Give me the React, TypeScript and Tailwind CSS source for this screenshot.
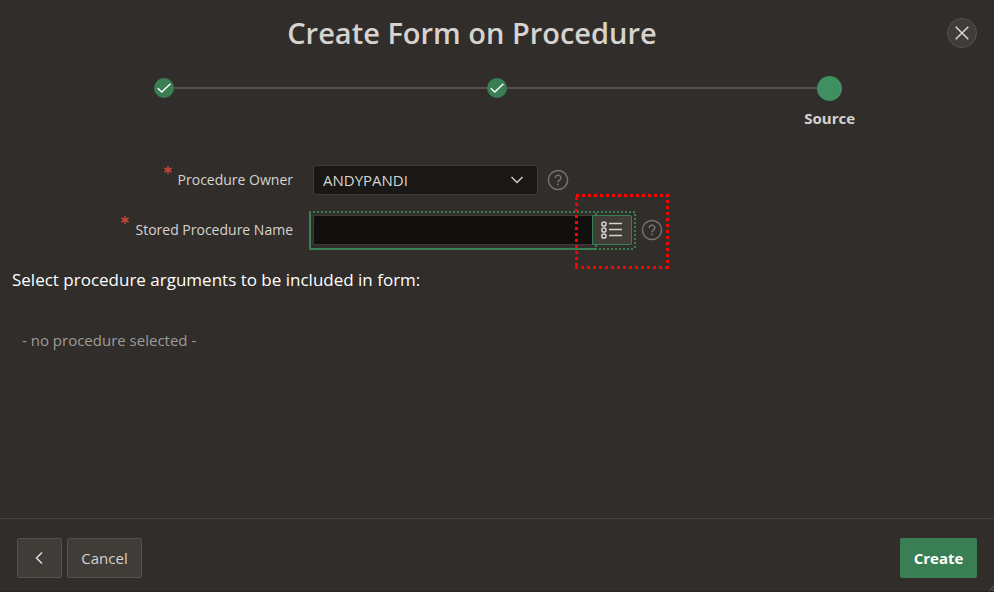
import React from "react";

function HelpButton({ label }: { label: string }) {
  return (
    <button type="button" aria-label={label} className="size-[22px] shrink-0">
      <svg width="22" height="22" viewBox="0 0 22 22" fill="none" stroke="#76716c" strokeWidth="1.5" aria-hidden="true">
        <circle cx="11" cy="11" r="9.6" />
        <path d="M8.200 8.900a2.800 2.700 0 1 1 4.300 2.200c-1 .6-1.500 1-1.500 2.200" strokeWidth="1.5" />
        <path d="M11 14.600v1.600" strokeWidth="1.6" />
      </svg>
    </button>
  );
}

function Required() {
  return (
    <svg width="8" height="8" viewBox="0 0 8 8" stroke="#c74634" strokeWidth="1.500" className="shrink-0 -translate-y-2.5" aria-hidden="true">
      <path d="M4 0v8M.4 2l7.200 4M.4 6l7.200-4" />
    </svg>
  );
}

function DoneMark() {
  return (
    <span className="flex size-5 items-center justify-center rounded-full bg-[#397f53]">
      <svg width="14" height="10" viewBox="0 0 14 10" fill="none" stroke="#fff" strokeWidth="1.4" aria-hidden="true">
        <path d="M.8 5.200l4 3.800L13.400.800" />
      </svg>
    </span>
  );
}

export default function App() {
  return (
    <main className="relative flex min-h-screen flex-col overflow-hidden border-b border-[#2a242a] bg-[#312d2a] font-['Open_Sans','Noto_Sans',sans-serif] text-[15px] leading-5 text-[#d6d3cf]">
      <header className="flex items-center px-[17px] pt-[15px]">
        <h1 className="flex-1 pr-5 text-center text-[29px] leading-9 font-semibold">Create Form on Procedure</h1>
        <button type="button" aria-label="Close" className="flex size-[30px] items-center justify-center rounded-full border border-[#55514c] bg-[#403c38]">
          <svg width="14" height="14" viewBox="0 0 14 14" stroke="#e0ddd9" strokeWidth="1.4" aria-hidden="true">
            <path d="M.7.700l12.600 12.600M13.300.700L.700 13.300" />
          </svg>
        </button>
      </header>

      <ol className="-mx-0.5 mt-[25px] grid grid-cols-3">
        <li className="flex h-6 items-center">
          <span className="flex-1" />
          <DoneMark />
          <span className="h-0.5 flex-1 bg-[#55514a]" />
        </li>
        <li className="flex h-6 items-center">
          <span className="h-0.5 flex-1 bg-[#55514a]" />
          <DoneMark />
          <span className="h-0.5 flex-1 bg-[#55514a]" />
        </li>
        <li>
          <div className="flex h-6 items-center">
            <span className="h-0.5 flex-1 bg-[#55514a]" />
            <span className="size-[25px] rounded-full bg-[#3f8f60]" />
            <span className="flex-1" />
          </div>
          <p className="mt-2 text-center font-bold">Source</p>
        </li>
      </ol>

      <form className="mt-[37px] flex flex-col gap-5">
        <div className="flex h-[30px] items-center">
          <label htmlFor="owner" className="mr-5 flex w-[293px] items-center justify-end gap-1.5 text-sm">
            <Required />
            Procedure Owner
          </label>
          <div className="relative mr-[9px]">
            <select id="owner" className="block h-[30px] w-[225px] appearance-none rounded-xs border border-[#3f3c38] bg-[#191816] pl-[9px] text-[#d6d3cf]">
              <option>ANDYPANDI</option>
            </select>
            <svg className="pointer-events-none absolute top-[11px] right-3.5" width="14" height="8" viewBox="0 0 14 8" fill="none" stroke="#d0cdc9" strokeWidth="1.5" aria-hidden="true">
              <path d="M1.500 1L7 6.500 12.500 1" />
            </svg>
          </div>
          <HelpButton label="Help for procedure owner" />
        </div>

        <div className="flex h-[30px] items-center">
          <label htmlFor="procedure" className="mr-5 flex w-[293px] items-center justify-end gap-1.5 text-sm">
            <Required />
            Stored Procedure Name
          </label>
          <div className="relative mr-[9px] flex">
            <input id="procedure" type="text" className="h-[30px] w-[279px] rounded-l-xs border border-r-0 border-[#3f3c38] bg-[#11100e] px-2 outline-none" />
            <button type="button" aria-label="Select procedure" className="flex h-[30px] w-10 items-center justify-center rounded-r-xs border border-[#397f53] bg-[#403c38]">
              <svg width="22" height="20" viewBox="0 0 22 20" fill="none" stroke="#d6d3cf" aria-hidden="true">
                <g strokeWidth="1.5">
                  <circle cx="2.900" cy="4" r="2.100" />
                  <circle cx="2.900" cy="10" r="2.100" />
                  <circle cx="2.900" cy="16" r="2.100" />
                </g>
                <path d="M8 3.500h13M8 9.500h13M8 15.500h13" strokeWidth="1.3" />
              </svg>
            </button>
            <svg className="pointer-events-none absolute -top-1 -left-1 overflow-visible" width="327" height="39" fill="none" stroke="#397f53" strokeWidth="2" shapeRendering="crispEdges" aria-hidden="true">
              <path d="M1 0V38H288" />
              <path d="M4 1H327M326 3V39M290 38H325" strokeDasharray="2 2" />
              <path d="M287 2v2M287 34v2" />
            </svg>
            <svg className="pointer-events-none absolute -top-[21px] left-[262px]" width="94" height="75" fill="none" stroke="#ff0000" strokeWidth="3" shapeRendering="crispEdges" aria-hidden="true">
              <path d="M1 1.500H94M0 73.500H94" strokeDasharray="3 3" />
              <path d="M1.500 3V75M92.500 0V75" strokeDasharray="3 3" />
            </svg>
          </div>
          <HelpButton label="Help for stored procedure name" />
        </div>
      </form>

      <section className="px-3 pt-[23px]">
        <h2 className="text-[17px] leading-6 text-white">Select procedure arguments to be included in form:</h2>
        <p className="mt-9 ml-2.5 leading-6 text-[#9f9b96]">- no procedure selected -</p>
      </section>

      <footer className="mt-auto flex gap-[5px] border-t border-[#45413d] px-[17px] pt-[19px] pb-[13px]">
        <button type="button" aria-label="Previous" className="flex h-10 w-[45px] items-center justify-center rounded-xs border border-[#55514c] bg-[#403c38]">
          <svg width="9" height="14" viewBox="0 0 9 14" fill="none" stroke="#e0ddd9" strokeWidth="1.5" aria-hidden="true">
            <path d="M7 1.500L1.500 7 7 12.500" />
          </svg>
        </button>
        <button type="button" className="h-10 w-[75px] rounded-xs border border-[#55514c] bg-[#403c38]">Cancel</button>
        <button type="button" className="ml-auto h-10 w-[77px] rounded-xs bg-[#397f53] font-bold text-white">Create</button>
      </footer>

      <svg className="absolute right-0 bottom-0" width="5" height="5" viewBox="0 0 5 5" stroke="#77736e" strokeWidth="0.8" aria-hidden="true">
        <path d="M0 5L5 0M3 5l2-2" />
      </svg>
    </main>
  );
}
